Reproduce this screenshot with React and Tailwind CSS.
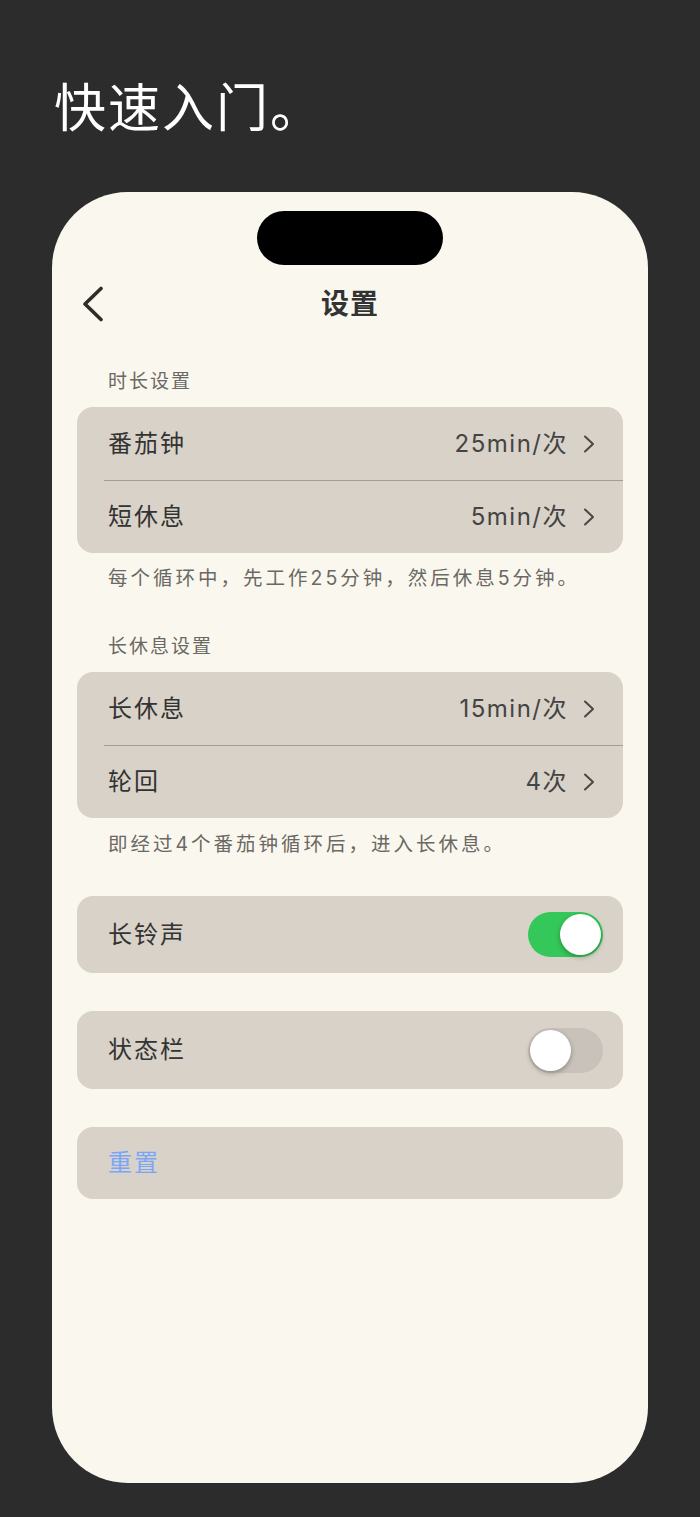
import React from "react";

const cjk = { fontFamily: '"Inter", "Noto Sans CJK SC", sans-serif' };

function Chevron() {
    return (
        <svg width="12" height="18" viewBox="0 0 12 18" fill="none" className="ml-[15px]">
            <path d="M2 1.5 L10 9 L2 16.5" stroke="#4a4744" strokeWidth="2" strokeLinecap="round" strokeLinejoin="round"/>
        </svg>
    );
}

function Row({label, value, h}) {
    return (
        <div className={`flex items-center justify-between pl-[31px] pr-[28px] ${h}`}>
            <span className="text-[24px] leading-[30px] tracking-[2px] text-[#333]">{label}</span>
            <div className="flex items-center">
                <span className="text-[24px] leading-[30px] tracking-[1.5px] text-[#444]">{value}</span>
                <Chevron/>
            </div>
        </div>
    );
}

function Toggle({on}) {
    return (
        <div className={`relative w-[75px] h-[45px] rounded-full ${on ? "bg-[#34c759]" : "bg-[#c9c2ba]"}`}>
            <div
                className={`absolute top-[2px] w-[41px] h-[41px] rounded-full bg-white shadow-[0_2px_5px_rgba(0,0,0,0.3)] ${on ? "right-[2px]" : "left-[2px]"}`}/>
        </div>
    );
}

function Label({children, className}) {
    return (
        <div className={`pl-[56px] h-[24px] leading-[24px] text-[19px] tracking-[2px] text-[#6b6865] ${className}`}>
            {children}
        </div>
    );
}

export default function App() {
    return (
        <div style={cjk} className="bg-[#2c2c2c] h-[1517px] w-full overflow-hidden">
            <div className="mt-[83px] ml-[54px] h-[52px] leading-[52px] text-[52px] text-white tracking-[2px]">
                快速入门。
            </div>

            <div className="mt-[57px] ml-[52px] w-[596px] h-[1291px] rounded-[76px] bg-[#faf8ee] pt-[19px]">
                <div className="mx-auto w-[186px] h-[54px] rounded-full bg-black"/>

                <div className="relative h-[78px] flex items-center justify-center">
                    <svg width="24" height="36" viewBox="0 0 24 36" fill="none" className="absolute left-[29px] top-[21px]">
                        <path d="M20 2.5 L4 18 L20 33.5" stroke="#2f2d2b" strokeWidth="3.6" strokeLinecap="round" strokeLinejoin="round"/>
                    </svg>
                    <span className="text-[28px] font-bold text-[#333] tracking-[1px]">设置</span>
                </div>

                <Label className="mt-[27px]">时长设置</Label>
                <div className="mt-[13px] mx-[25px] rounded-[16px] bg-[#d9d2c8] overflow-hidden">
                    <Row label="番茄钟" value="25min/次" h="h-[73px]"/>
                    <div className="ml-[27px] h-px bg-[#a19d98]"/>
                    <Row label="短休息" value="5min/次" h="h-[72px]"/>
                </div>
                <Label className="mt-[13px] !text-[19.5px] !tracking-[3px]">每个循环中，先工作25分钟，然后休息5分钟。</Label>

                <Label className="mt-[45px]">长休息设置</Label>
                <div className="mt-[13px] mx-[25px] rounded-[16px] bg-[#d9d2c8] overflow-hidden">
                    <Row label="长休息" value="15min/次" h="h-[73px]"/>
                    <div className="ml-[27px] h-px bg-[#a19d98]"/>
                    <Row label="轮回" value="4次" h="h-[72px]"/>
                </div>
                <Label className="mt-[14px] !text-[19.5px] !tracking-[3px]">即经过4个番茄钟循环后，进入长休息。</Label>

                <div className="mt-[40px] mx-[25px] h-[77px] rounded-[16px] bg-[#d9d2c8] flex items-center justify-between pl-[31px] pr-[20px]">
                    <span className="text-[24px] tracking-[2px] text-[#333]">长铃声</span>
                    <Toggle on/>
                </div>

                <div className="mt-[38px] mx-[25px] h-[78px] rounded-[16px] bg-[#d9d2c8] flex items-center justify-between pl-[31px] pr-[20px]">
                    <span className="text-[24px] tracking-[2px] text-[#333]">状态栏</span>
                    <Toggle on={false}/>
                </div>

                <div className="mt-[38px] mx-[25px] h-[72px] rounded-[16px] bg-[#d9d2c8] flex items-center pl-[31px]">
                    <span className="text-[24px] tracking-[2px] text-[#7ba6f7]">重置</span>
                </div>
            </div>
        </div>
    );
}
